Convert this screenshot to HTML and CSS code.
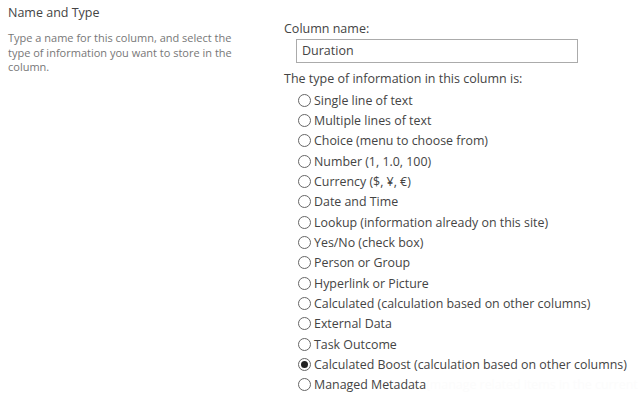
FILE: index.html
```html
<!DOCTYPE html>
<html>
<head>
<meta charset="utf-8">
<link rel="stylesheet" href="styles.css">
</head>
<body>
<div class="page">
  <div class="left">
    <h3 class="title">Name and Type</h3>
    <p class="desc">Type a name for this column, and select the type of information you want to store in the column.</p>
  </div>
  <div class="right">
    <div class="label">Column name:</div>
    <div class="input">Duration</div>
    <div class="label type-label">The type of information in this column is:</div>
    <ul class="options">
      <li><span class="radio"></span>Single line of text</li>
      <li><span class="radio"></span>Multiple lines of text</li>
      <li><span class="radio"></span>Choice (menu to choose from)</li>
      <li><span class="radio"></span>Number (1, 1.0, 100)</li>
      <li><span class="radio"></span>Currency ($, ¥, €)</li>
      <li><span class="radio"></span>Date and Time</li>
      <li><span class="radio"></span>Lookup (information already on this site)</li>
      <li><span class="radio"></span>Yes/No (check box)</li>
      <li><span class="radio"></span>Person or Group</li>
      <li><span class="radio"></span>Hyperlink or Picture</li>
      <li><span class="radio"></span>Calculated (calculation based on other columns)</li>
      <li><span class="radio"></span>External Data</li>
      <li><span class="radio"></span>Task Outcome</li>
      <li><span class="radio checked"></span>Calculated Boost (calculation based on other columns)</li>
      <li><span class="radio"></span>Managed Metadata<span class="ghost"> (manage related items in the current</span></li>
    </ul>
  </div>
</div>
</body>
</html>
```
FILE: styles.css
```css
html, body {
  margin: 0;
  padding: 0;
  background: #ffffff;
  overflow: hidden;
}
body {
  font-family: "Open Sans", "Noto Sans", sans-serif;
  color: #444444;
}
.page {
  display: flex;
  padding: 4px 0 0 8px;
}
.left {
  width: 240px;
  flex: none;
}
.title {
  margin: 0;
  font-size: 12.5px;
  font-weight: normal;
  line-height: 17px;
  color: #444444;
}
.desc {
  margin: 10px 0 0 0;
  font-size: 11px;
  line-height: 14.5px;
  color: #777777;
  width: 232px;
}
.right {
  margin-left: 36px;
  padding-top: 16px;
  flex: 1;
  min-width: 0;
}
.label {
  font-size: 12.5px;
  line-height: 17px;
  color: #444444;
}
.input {
  margin: 2px 0 0 12px;
  width: 270px;
  height: 22px;
  border: 1px solid #ababab;
  padding: 0 5px;
  font-size: 12.5px;
  line-height: 22px;
  color: #444444;
}
.type-label {
  margin-top: 7px;
}
.options {
  list-style: none;
  margin: 3px 0 0 0;
  padding: 0 0 0 14px;
}
.options li {
  display: flex;
  align-items: center;
  height: 20.35px;
  font-size: 12.4px;
  color: #444444;
  white-space: nowrap;
}
.radio {
  width: 11px;
  height: 11px;
  border: 1px solid #666666;
  border-radius: 50%;
  margin-right: 3px;
  flex: none;
  box-sizing: content-box;
  position: relative;
}
.radio.checked::after {
  content: "";
  position: absolute;
  left: 2px;
  top: 2px;
  width: 7px;
  height: 7px;
  border-radius: 50%;
  background: #222222;
}
.ghost {
  color: #fcfcfc;
}
```
